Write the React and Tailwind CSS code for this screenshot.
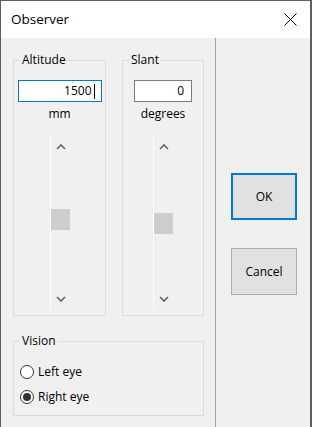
import React from 'react';

const Chevron = ({ down }) => (
    <svg width="10" height="6" viewBox="0 0 10 6" className="block">
        <path
            d={down ? 'M1 1 L5 5 L9 1' : 'M1 5 L5 1 L9 5'}
            fill="none"
            stroke="#606060"
            strokeWidth="1.6"
        />
    </svg>
);

// vertical scroll bar, thumbTop = offset of the thumb inside the track
const ScrollBar = ({ thumbTop }) => (
    <div className="mt-[13px] w-[20px] h-[174px] border-l border-white flex flex-col items-center">
        <div className="mt-[9px] ml-[1px]">
            <Chevron />
        </div>
        <div className="w-full flex-1 flex flex-col">
            <div style={{ height: thumbTop }} />
            <div className="w-full h-[21px] bg-[#cdcdcd]" />
        </div>
        <div className="mb-[7px] ml-[1px]">
            <Chevron down />
        </div>
    </div>
);

const Group = ({ label, className, children }) => (
    <fieldset className={`border border-[#dcdcdc] ${className}`}>
        <legend className="ml-[6px] px-[2px] leading-[16px]">{label}</legend>
        {children}
    </fieldset>
);

const Radio = ({ checked, label }) => (
    <div className="flex items-center h-[25px]">
        <span className="w-[14px] h-[14px] rounded-full border border-[#333] bg-white flex items-center justify-center">
            {checked && <span className="w-[8px] h-[8px] rounded-full bg-[#333]" />}
        </span>
        <span className="ml-[4px]">{label}</span>
    </div>
);

export default function App() {
    return (
        <div
            className="w-[312px] h-[427px] flex flex-col bg-[#f0f0f0] border-l border-t border-r-2 border-[#5f5f5f] text-[12px] text-black overflow-hidden"
            style={{ fontFamily: '"Open Sans", "Noto Sans", sans-serif' }}
        >
            {/* title bar */}
            <div className="h-[37px] bg-white flex items-center justify-between pl-[10px] pr-[13px]">
                <span className="text-[13.5px] leading-none">Observer</span>
                <svg width="13" height="13" viewBox="0 0 13 13">
                    <path d="M0.5 0.5 L12.5 12.5 M12.5 0.5 L0.5 12.5" stroke="#000" strokeWidth="1" />
                </svg>
            </div>

            <div className="flex flex-1">
                {/* left part */}
                <div className="w-[214px] pl-[12px] pt-[14px]">
                    <div className="flex gap-[16px]">
                        <Group label="Altitude" className="w-[93px] h-[264px]">
                            <div className="flex flex-col items-center">
                                <div className="mt-[12px] w-[84px] h-[22px] border border-[#0078d7] bg-white flex items-center justify-end pr-[6px]">
                                    <span className="leading-none">1500</span>
                                    <span className="ml-[2px] w-px h-[15px] bg-black" />
                                </div>
                                <div className="mt-[4px] leading-[16px]">mm</div>
                                <ScrollBar thumbTop={59} />
                            </div>
                        </Group>
                        <Group label="Slant" className="w-[82px] h-[264px]">
                            <div className="flex flex-col items-center">
                                <div className="mt-[12px] w-[58px] h-[22px] border border-[#7a7a7a] bg-white flex items-center justify-end pr-[7px]">
                                    <span className="leading-none">0</span>
                                </div>
                                <div className="mt-[4px] leading-[16px]">degrees</div>
                                <ScrollBar thumbTop={63} />
                            </div>
                        </Group>
                    </div>

                    <Group label="Vision" className="mt-[17px] w-[191px] h-[83px]">
                        <div className="pl-[6px] pt-[10px]">
                            <Radio label="Left eye" />
                            <Radio checked label="Right eye" />
                        </div>
                    </Group>
                </div>

                <div className="w-px bg-[#a0a0a0]" />

                {/* right part */}
                <div className="flex-1 flex flex-col pl-[15px] pt-[135px]">
                    <button className="w-[66px] h-[47px] border-2 border-[#0078d7] bg-[#e1e1e1]">OK</button>
                    <button className="mt-[28px] w-[66px] h-[47px] border border-[#adadad] bg-[#e1e1e1]">Cancel</button>
                </div>
            </div>
        </div>
    );
}
